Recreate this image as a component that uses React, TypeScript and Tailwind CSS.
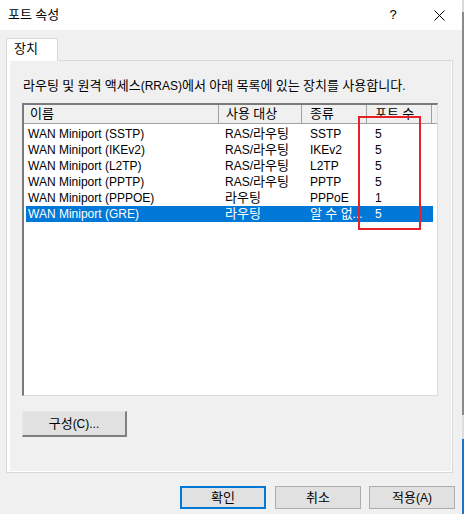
import React from 'react';

const rows = [
  { name: 'WAN Miniport (SSTP)', use: 'RAS/라우팅', type: 'SSTP', ports: '5' },
  { name: 'WAN Miniport (IKEv2)', use: 'RAS/라우팅', type: 'IKEv2', ports: '5' },
  { name: 'WAN Miniport (L2TP)', use: 'RAS/라우팅', type: 'L2TP', ports: '5' },
  { name: 'WAN Miniport (PPTP)', use: 'RAS/라우팅', type: 'PPTP', ports: '5' },
  { name: 'WAN Miniport (PPPOE)', use: '라우팅', type: 'PPPoE', ports: '1' },
  { name: 'WAN Miniport (GRE)', use: '라우팅', type: '알 수 없...', ports: '5', selected: true },
];

// hangul runs are set a bit larger so they get Malgun Gothic's width
const T = ({ s }: { s: string }) => (
  <>
    {s.split(/([\uAC00-\uD7A3]+)/).map((p, i) =>
      /[\uAC00-\uD7A3]/.test(p) ? (
        <span key={i} className="text-[13px]">
          {p}
        </span>
      ) : (
        p
      )
    )}
  </>
);

const App = () => {
  return (
    <div className="relative w-[464px] h-[514px] flex bg-white overflow-hidden text-[12px] text-black font-['Liberation_Sans','Noto_Sans_CJK_KR',sans-serif]">
      <div className="w-[462px] flex flex-col">
        {/* title bar */}
        <div className="h-[30px] bg-white flex items-center">
          <span className="flex-1 pl-[8px] leading-[16px]">
            <T s="포트 속성" />
          </span>
          <span className="w-[46px] text-center text-[13px] leading-[16px]">?</span>
          <span className="w-[46px] flex items-center justify-center">
            <svg width="11" height="11" viewBox="0 0 11 11">
              <path d="M0.5 0.5L10.5 10.5M10.5 0.5L0.5 10.5" stroke="#000" strokeWidth="1" fill="none" />
            </svg>
          </span>
        </div>

        {/* body */}
        <div className="flex-1 bg-[#f0f0f0] pt-[8px] pl-[6px] flex flex-col">
          <div className="relative z-10 w-[52px] h-[23px] -mb-px bg-white border border-b-0 border-[#d9d9d9] pl-[7px] leading-[20px]">
            <T s="장치" />
          </div>
          <div className="w-[447px] h-[413px] border border-[#d9d9d9] bg-white pl-[3px] pr-px pb-px flex">
            <div className="flex-1 bg-[#f0f0f0] flex flex-col pl-[12px] pt-[17px]">
              <div className="ml-px leading-[16px] whitespace-nowrap">
                <T s="라우팅 및 원격 액세스(RRAS)에서 아래 목록에 있는 장치를 사용합니다." />
              </div>

              {/* list view */}
              <div className="mt-[9px] w-[416px] h-[293px] bg-white border-l-2 border-t-2 border-r border-b border-l-[#7a7a7a] border-t-[#7a7a7a] border-r-[#dcdcdc] border-b-[#dcdcdc]">
                <div className="flex h-[19px] bg-[#f0f0f0] border-b border-[#a0a0a0] leading-[18px] whitespace-nowrap">
                  <div className="w-[195px] border-r border-[#a0a0a0] pl-[6px]">
                    <T s="이름" />
                  </div>
                  <div className="w-[83px] border-r border-[#a0a0a0] pl-[7px]">
                    <T s="사용 대상" />
                  </div>
                  <div className="w-[65px] border-r border-[#a0a0a0] pl-[8px]">
                    <T s="종류" />
                  </div>
                  <div className="w-[65px] border-r border-[#a0a0a0] pl-[8px]">
                    <T s="포트 수" />
                  </div>
                  <div className="flex-1" />
                </div>
                <div className="mt-[2px] ml-[2px] w-[407px] flex flex-col">
                  {rows.map((r) => (
                    <div
                      key={r.name}
                      className={`flex h-[16px] leading-[16px] whitespace-nowrap ${r.selected ? 'bg-[#0078d7] text-white' : ''}`}
                    >
                      <div className="w-[193px] pl-[2px]">{r.name}</div>
                      <div className="w-[83px] pl-[6px]">
                        <T s={r.use} />
                      </div>
                      <div className="w-[65px] pl-[8px]">
                        <T s={r.type} />
                      </div>
                      <div className="w-[65px] pl-[8px]">{r.ports}</div>
                    </div>
                  ))}
                </div>
              </div>

              <button
                type="button"
                className="mt-[15px] w-[105px] h-[26px] bg-[#e1e1e1] border-t border-l border-r-2 border-b-2 border-t-[#e8e8e8] border-l-[#e8e8e8] border-r-[#7f7f7f] border-b-[#7f7f7f] flex items-center justify-center leading-none"
              >
                <span>
                  <T s="구성(C)..." />
                </span>
              </button>
            </div>
          </div>

          {/* dialog buttons */}
          <div className="mt-[13px] flex pl-[174px]">
            <button type="button" className="w-[86px] h-[23px] bg-[#e1e1e1] border-2 border-[#0078d7] flex items-center justify-center leading-none">
              <span>
                <T s="확인" />
              </span>
            </button>
            <button type="button" className="ml-[9px] w-[86px] h-[23px] bg-[#e1e1e1] border border-[#adadad] flex items-center justify-center leading-none">
              <span>
                <T s="취소" />
              </span>
            </button>
            <button type="button" className="ml-[8px] w-[86px] h-[23px] bg-[#e1e1e1] border border-[#adadad] flex items-center justify-center leading-none">
              <span>
                <T s="적용(A)" />
              </span>
            </button>
          </div>
        </div>
      </div>

      {/* edge of the window behind */}
      <div className="w-[2px] flex flex-col">
        <div className="h-[12px] bg-[#dadada]" />
        <div className="h-[403px] bg-[#8a8a8a]" />
        <div className="h-[24px] bg-[#dcdcdc]" />
        <div className="flex-1 bg-[#1f72c4]" />
      </div>

      {/* red annotation box */}
      <div className="absolute left-[358px] top-[116px] w-[63px] h-[114px] border-2 border-[#e8202a] pointer-events-none" />
    </div>
  );
};

export default App;
